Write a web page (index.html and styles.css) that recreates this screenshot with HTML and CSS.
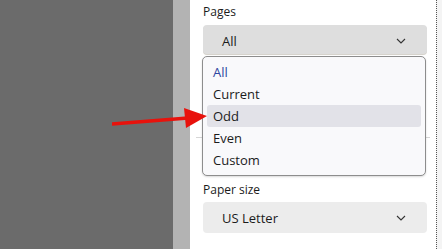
FILE: index.html
```html
<!DOCTYPE html>
<html lang="en">
<head>
  <meta charset="UTF-8" />
  <title>Print options</title>
  <link rel="stylesheet" href="styles.css">
</head>
<body>

  <div class="backdrop"></div>
  <div class="edge"></div>

  <!-- Print settings panel -->
  <aside class="panel">
    <div class="field">
      <label class="field-label">Pages</label>
      <div class="select is-open">
        <span>All</span>
        <svg class="chevron" width="10" height="6" viewBox="0 0 10 6"><path d="M1 1l4 4 4-4" fill="none" stroke="#333" stroke-width="1.1"/></svg>
      </div>
    </div>

    <hr class="divider">

    <div class="field">
      <label class="field-label">Paper size</label>
      <div class="select">
        <span>US Letter</span>
        <svg class="chevron" width="10" height="6" viewBox="0 0 10 6"><path d="M1 1l4 4 4-4" fill="none" stroke="#333" stroke-width="1.1"/></svg>
      </div>
    </div>

    <!-- Open dropdown menu -->
    <ul class="menu">
      <li class="menu-item is-selected">All</li>
      <li class="menu-item">Current</li>
      <li class="menu-item is-hover">Odd</li>
      <li class="menu-item">Even</li>
      <li class="menu-item">Custom</li>
    </ul>
  </aside>

  <div class="scroll-edge"></div>

  <!-- Annotation arrow -->
  <svg class="arrow" width="100" height="30" viewBox="0 0 100 30">
    <path d="M0 22 L76 16" stroke="#e8120c" stroke-width="3.5" fill="none"/>
    <path d="M72 6 L95 14 L74 26 Z" fill="#e8120c"/>
  </svg>

</body>
</html>
```

FILE: styles.css
```css
* {
  box-sizing: border-box;
}
body {
  margin: 0;
  display: flex;
  height: 249px;
  overflow: hidden;
  font-family: "Open Sans", "Noto Sans", sans-serif;
  font-size: 12px;
  color: #1b1b1b;
  background: #fff;
}

/* Dimmed page behind the panel */
.backdrop {
  width: 173px;
  background: #6b6b6b;
}

.edge {
  width: 17px;
  background: #b3b3b3;
}

/* Panel */
.panel {
  position: relative;
  width: 246px;
  background: #fff;
  padding: 3px 9px 0 13px;
}

.field-label {
  display: block;
  line-height: 17px;
  margin-bottom: 4px;
}

.select {
  display: flex;
  justify-content: space-between;
  align-items: center;
  height: 31px;
  padding: 1px 21px 0 19px;
  background: #ececec;
  border-radius: 4px;
  font-size: 13px;
}

.select.is-open {
  height: 29px;
  margin-top: 5px;
  padding-top: 2px;
  background: #dedede;
  box-shadow: 0 1px 0 #d6d3cc;
}

.divider {
  border: none;
  border-top: 1px solid #d6d6d6;
  margin: 83px -3px 43px -7px;
}

/* Dropdown menu */
.menu {
  position: absolute;
  top: 56px;
  left: 12px;
  width: 224px;
  margin: 0;
  padding: 4px 4px;
  list-style: none;
  background: #f9f9fb;
  border: 1px solid #8d8d8d;
  border-radius: 5px;
  box-shadow: 0 1px 2px rgba(0, 0, 0, 0.15);
}

.menu-item {
  height: 22px;
  line-height: 22px;
  padding-left: 6px;
  border-radius: 3px;
  font-size: 13px;
}

.menu-item.is-selected {
  color: #2e46a0;
}

.menu-item.is-hover {
  background: #e2e2e8;
}

.scroll-edge {
  width: 6px;
  border-left: 1px dotted #555;
  background: #f4f4f4;
}

.arrow {
  position: absolute;
  left: 112px;
  top: 102px;
}
```
